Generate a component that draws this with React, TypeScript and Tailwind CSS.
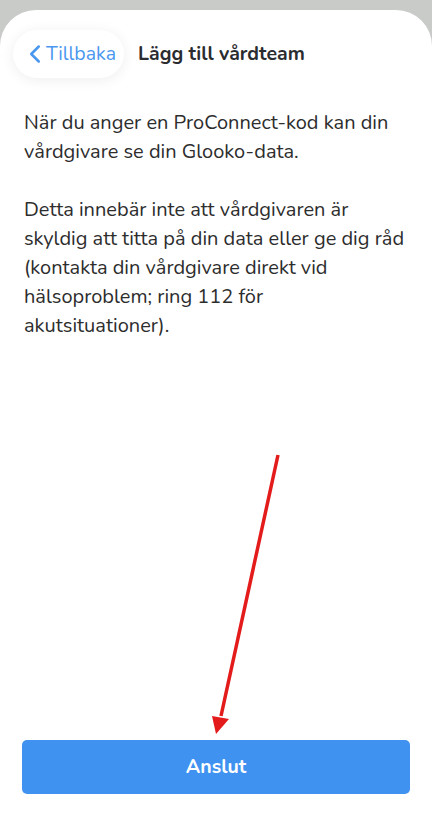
import { ChevronLeft } from 'lucide-react'

const FONT = { fontFamily: '"Nunito", "Lato", "Open Sans", sans-serif' }

export default function App() {
  return (
    <div className="relative h-[830px] w-[432px] overflow-hidden bg-[#c9cbc9]" style={FONT}>
      <div className="mt-[10px] flex h-[820px] flex-col rounded-t-[36px] bg-white">
        {/* Header */}
        <div className="flex items-center gap-[14px] pl-[13px] pt-[20px]">
          <button className="flex h-[48px] items-center rounded-[24px] bg-white pl-[7px] pr-[8px] text-[19.5px] text-[#4a97f0] shadow-[0_2px_14px_rgba(0,0,0,0.07)]">
            <ChevronLeft size={30} strokeWidth={2} className="-mr-[4px]" />
            Tillbaka
          </button>
          <h1 className="text-[19.5px] font-bold text-[#2a2c30]">Lägg till vårdteam</h1>
        </div>

        {/* Body */}
        <div className="flex flex-col gap-[29px] px-[24px] pt-[30px] text-[20px] leading-[29px] text-[#2d2d2d]">
          <p>När du anger en ProConnect-kod kan din vårdgivare se din Glooko-data.</p>
          <p>
            Detta innebär inte att vårdgivaren är skyldig att titta på din data eller ge dig råd
            (kontakta din vårdgivare direkt vid hälsoproblem; ring 112 för akutsituationer).
          </p>
        </div>

        <div className="mt-auto px-[22px] pb-[36px]">
          <button className="flex h-[54px] w-full items-center justify-center rounded-[5px] bg-[#4092f1] text-[19.5px] font-bold text-white">
            Anslut
          </button>
        </div>
      </div>

      {/* Annotation arrow */}
      <svg className="pointer-events-none absolute left-0 top-0" width="432" height="830">
        <line x1="278" y1="455" x2="221" y2="716" stroke="#e41b1b" strokeWidth="3.5" />
        <polygon points="216,734 212,716 229,719" fill="#e41b1b" />
      </svg>
    </div>
  )
}
